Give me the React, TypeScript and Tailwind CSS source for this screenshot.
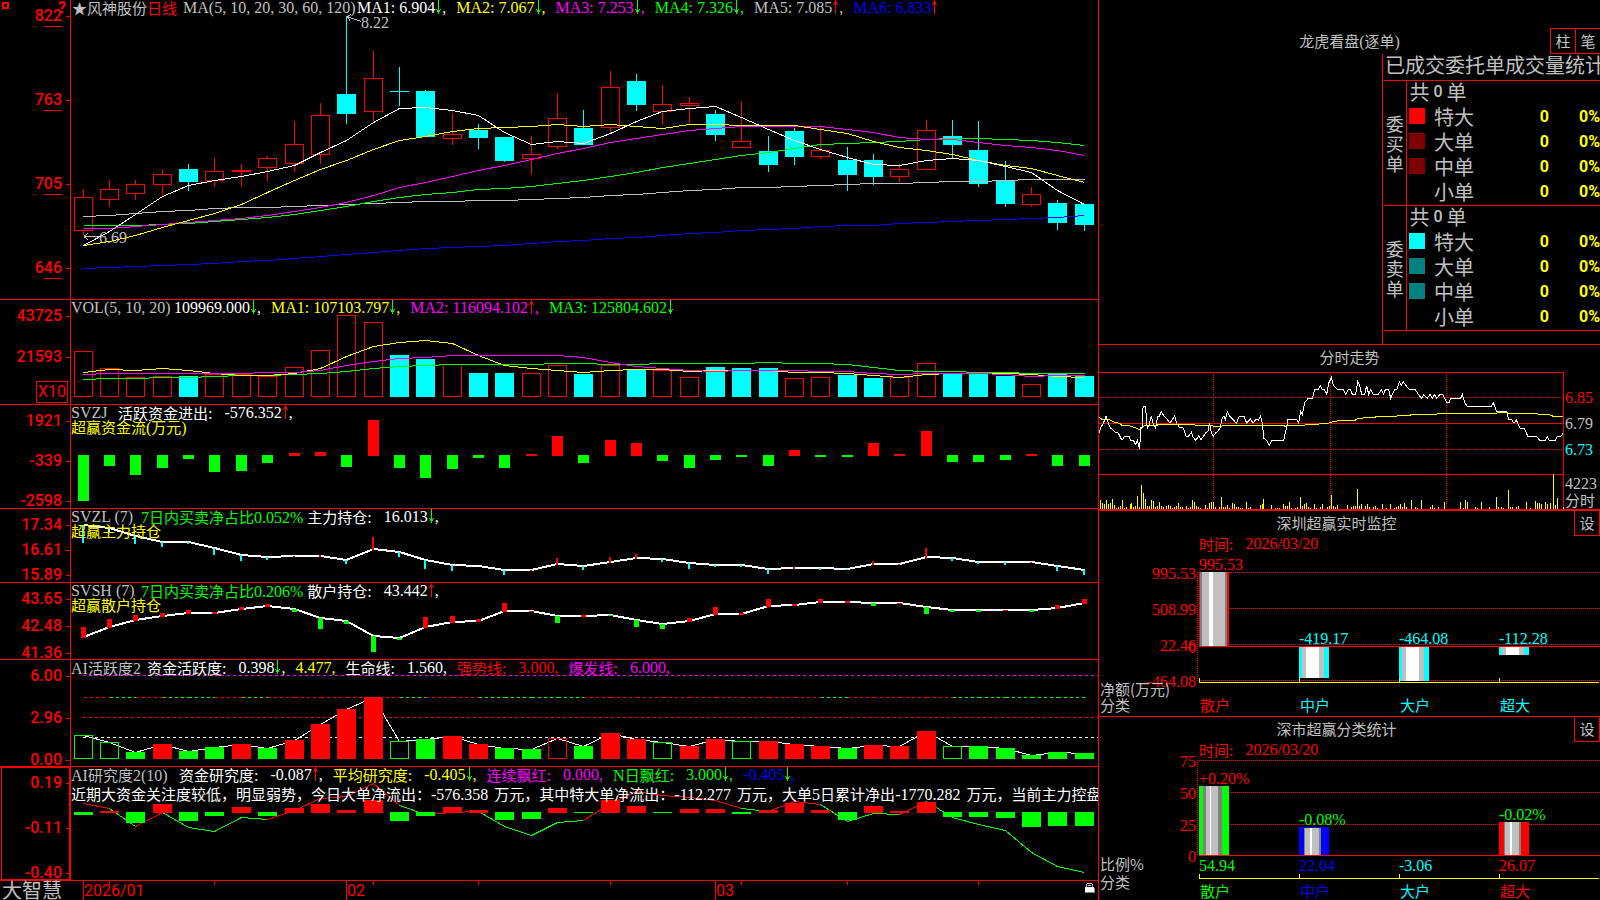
import type { ReactNode } from 'react'

const RED = '#ff0000'
const GREEN = '#00ff00'
const CYAN = '#00ffff'
const YELLOW = '#ffff00'
const MAGENTA = '#ff00ff'
const BLUE = '#0000ff'
const WHITE = '#ffffff'
const SILVER = '#c0c0c0'

// [high, body top, body bottom, low, rising]
const candles: [number, number, number, number, number][] = [
  [189, 197, 230, 235, 1], [180, 189, 199, 207, 1], [180, 184, 193, 200, 1], [169, 174, 184, 197, 1],
  [164, 169, 182, 191, 0], [158, 171, 180, 187, 1], [164, 170, 171, 187, 1], [156, 158, 167, 181, 1],
  [121, 144, 163, 172, 1], [103, 115, 154, 164, 1], [16, 94, 114, 124, 0], [51, 78, 111, 121, 1],
  [67, 91, 92, 106, 0], [90, 91, 137, 137, 0], [113, 134, 138, 145, 1], [124, 130, 138, 149, 0],
  [137, 137, 161, 162, 0], [136, 154, 158, 175, 1], [93, 118, 146, 149, 1], [110, 128, 145, 145, 0],
  [71, 87, 127, 133, 1], [74, 81, 105, 111, 0], [85, 104, 111, 125, 1], [97, 103, 105, 124, 1],
  [110, 114, 135, 141, 0], [101, 141, 147, 147, 1], [136, 151, 165, 172, 0], [128, 131, 157, 165, 0],
  [125, 150, 156, 159, 1], [147, 160, 175, 191, 0], [154, 160, 177, 185, 0], [164, 169, 176, 182, 1],
  [120, 130, 169, 169, 1], [120, 136, 145, 158, 0], [121, 150, 184, 187, 0], [161, 181, 204, 207, 0],
  [187, 194, 204, 207, 1], [200, 203, 223, 230, 0], [204, 204, 225, 231, 0],
]

const priceMa: [string, number[]][] = [
  [BLUE, [268, 267, 266, 265, 264, 263, 261, 260, 258, 256, 254, 252, 250, 248, 247, 246, 245, 243, 241, 240, 238, 237, 235, 233, 232, 230, 229, 228, 226, 225, 225, 223, 222, 221, 220, 219, 218, 217, 215]],
  [SILVER, [216, 215, 213, 211, 210, 208, 207, 207, 206, 205, 204, 203, 202, 201, 201, 200, 200, 199, 198, 197, 195, 194, 192, 190, 189, 187, 187, 186, 185, 184, 183, 183, 182, 181, 181, 180, 179, 179, 179]],
  [GREEN, [225, 225, 225, 224, 223, 221, 219, 217, 214, 210, 206, 201, 197, 194, 192, 189, 188, 186, 183, 180, 176, 172, 167, 163, 159, 155, 152, 148, 144, 143, 142, 141, 139, 138, 138, 139, 140, 142, 145]],
  [MAGENTA, [228, 228, 226, 224, 222, 220, 218, 215, 211, 207, 202, 195, 187, 182, 176, 170, 165, 159, 153, 148, 142, 138, 134, 130, 128, 126, 126, 126, 126, 129, 132, 137, 139, 139, 142, 145, 147, 150, 155]],
  [YELLOW, [245, 241, 235, 227, 220, 213, 204, 192, 180, 169, 160, 149, 140, 136, 131, 128, 127, 126, 124, 126, 124, 126, 128, 124, 124, 125, 125, 125, 129, 133, 141, 147, 150, 154, 160, 165, 168, 175, 182]],
  [WHITE, [245, 231, 214, 196, 185, 180, 176, 171, 165, 152, 140, 122, 108, 107, 110, 115, 132, 144, 141, 143, 133, 121, 111, 108, 106, 117, 129, 140, 149, 157, 164, 165, 160, 158, 160, 166, 172, 190, 204]],
]

const volumeTops = [51, 68, 77, 76, 76, 74, 74, 76, 67, 50, 15, 22, 55, 59, 64, 73, 73, 73, 65, 74, 65, 69, 70, 77, 67, 68, 68, 78, 77, 75, 78, 77, 63, 74, 74, 76, 84, 74, 76]
// r hollow, c filled
const volumeKind = 'rrrrcrrrrrrrccrccrrcrcrrcccrrccrrcccrcc'

const volumeMa: [string, number[]][] = [
  [GREEN, [79, 78, 78, 77, 77, 76, 75, 75, 74, 73, 71, 68, 66, 65, 64, 64, 64, 64, 63, 63, 64, 64, 63, 63, 63, 63, 62, 63, 63, 64, 67, 70, 71, 71, 72, 72, 73, 73, 73]],
  [YELLOW, [72, 69, 70, 68, 70, 73, 75, 75, 73, 68, 56, 46, 42, 40, 43, 55, 65, 68, 70, 72, 70, 69, 69, 71, 70, 70, 70, 72, 72, 73, 75, 77, 74, 73, 73, 73, 74, 76, 77]],
  [MAGENTA, [74, 73, 73, 73, 73, 73, 73, 72, 72, 70, 65, 61, 58, 57, 55, 55, 55, 55, 55, 57, 62, 66, 68, 70, 71, 70, 70, 70, 71, 71, 73, 74, 73, 73, 73, 74, 76, 75, 75]],
]

const flow = [-46, -11, -20, -13, -4, -17, -16, -8, 3, 4, -12, 36, -13, -23, -14, -3, -13, 2, 20, -8, 16, 13, -6, -13, -5, -2, -11, 6, -2, -2, 13, 2, 25, -7, -7, -5, 2, -11, -11]

const mainHold = [16, 19, 27, 33, 33, 39, 46, 48, 47, 47, 51, 40, 43, 51, 56, 57, 61, 61, 55, 57, 53, 49, 50, 54, 56, 56, 60, 59, 59, 60, 55, 55, 48, 49, 53, 53, 53, 57, 61]
const mainDelta = [-18, -5, -8, -5, -2, -7, -6, -3, 1, 2, -4, 13, -5, -9, -6, 0, -5, 1, 7, -4, 6, 5, -3, -6, -2, -2, -5, 2, -2, -1, 4, 1, 10, -3, -2, -3, 1, -5, -5]

const retailHold = [54, 44, 37, 33, 30, 30, 26, 23, 26, 35, 38, 53, 55, 44, 39, 38, 28, 28, 33, 33, 32, 37, 41, 38, 31, 31, 23, 22, 19, 19, 20, 20, 24, 27, 27, 27, 27, 25, 20]
const retailDelta = [11, 9, 6, 4, 4, 2, 3, 3, -3, -11, -3, -16, -2, 11, 7, 3, 9, 1, -7, 2, -1, -7, -5, 4, 8, 2, 8, 2, 4, 2, -3, 1, -7, -2, -2, 1, -2, 4, 5]

// g/r filled, G/R hollow
const activityKind = 'GGgrggrgrrrrGgrrggRgrrGrrGrrrgrrrGggggg'
const activityTops = [75, 82, 92, 84, 91, 87, 84, 88, 80, 64, 49, 37, 81, 79, 76, 84, 88, 89, 78, 86, 73, 79, 82, 86, 79, 81, 81, 84, 86, 88, 85, 86, 71, 86, 86, 88, 95, 92, 93]
const activitySegments = 'rgrggrgrrrrrgrrggggrrrrrrrrrgrrrrggggg'

const research = [-3, 2, -11, 9, -9, -4, 6, -4, 5, 9, 3, 13, -9, -4, 6, 3, -8, -7, 5, -1, 13, 7, -1, 4, 4, -2, 3, 10, 3, -8, 7, 2, 11, -5, -5, -6, -15, -14, -14]
const researchLine = [36, 41, 59, 45, 60, 64, 50, 52, 43, 31, 29, 16, 38, 47, 45, 44, 59, 68, 55, 53, 36, 24, 28, 30, 33, 41, 44, 34, 37, 54, 46, 47, 34, 50, 57, 63, 85, 99, 105]
const researchSegments = 'rgrggggrrrrrgrrggggrrrrrrgrrgggrgggggg'

const minutePrice =
  '27,280 33,262 40,250 48,228 55,250 62,264 70,270 76,277 84,278 96,301 103,290 118,290 121,301 130,301 137,314 142,302 149,328 152,262 156,262 156,213 161,199 166,199 168,220 172,265 178,252 184,228 190,252 197,265 203,228 208,228 214,215 222,228 230,236 240,250 246,240 254,228 260,250 268,262 280,264 289,290 296,288 304,277 309,290 317,301 326,288 333,299 341,288 348,277 354,274 358,250 364,277 370,289 378,277 384,274 391,262 396,236 402,228 406,238 412,215 418,228 427,236 439,250 448,228 462,228 470,250 481,236 489,250 498,238 505,240 512,228 517,252 522,295 530,301 538,315 545,301 581,301 589,265 594,238 620,238 626,250 632,215 637,225 644,187 655,175 667,175 674,149 684,149 691,137 697,148 704,150 710,163 716,130 724,113 730,135 742,149 760,149 767,163 774,149 782,149 787,163 797,163 803,125 809,137 815,163 824,163 830,137 836,163 842,149 849,163 865,163 874,149 881,163 886,149 896,149 902,175 908,160 914,149 920,149 928,125 934,135 940,125 948,137 958,149 976,149 985,163 995,175 1001,163 1012,175 1020,163 1027,175 1033,163 1040,175 1050,163 1058,163 1070,188 1078,187 1082,175 1112,175 1117,163 1124,188 1132,199 1204,199 1210,188 1220,215 1250,215 1256,238 1264,238 1272,250 1279,240 1290,265 1303,265 1314,290 1341,290 1349,301 1366,301 1372,290 1378,301 1396,301 1402,290 1412,290 1419,280'
const minuteAverage =
  '27,232 36,238 56,238 75,247 90,250 96,256 120,258 137,264 148,269 165,256 200,256 207,253 310,253 318,256 365,256 372,259 396,259 398,256 580,256 585,259 600,256 644,256 650,253 684,253 690,250 715,250 730,244 760,241 795,241 803,235 855,232 860,229 920,229 925,226 960,226 965,223 1040,223 1045,220 1220,220 1222,217 1250,217 1256,220 1340,220 1345,223 1375,223 1390,229 1419,229'
const minuteVolume =
  '31:480 37:489 43:492 49:480 55:492 60:490 67:477 73:495 79:504 85:501 91:498 97:480 103:504 109:501 121:492 124:489 130:501 136:498 142:468 148:501 154:435 160:459 166:477 172:498 178:498 184:480 190:483 196:500 202:499 208:486 214:498 220:501 229:498 235:495 241:498 247:504 253:500 259:497 265:489 271:501 277:500 289:498 295:504 301:501 307:480 313:486 319:498 325:501 331:504 346:495 352:504 358:489 364:486 370:486 376:501 388:501 394:471 400:501 406:501 412:495 418:504 427:489 433:492 439:500 445:501 451:504 457:504 469:486 475:504 481:501 511:495 517:492 520:477 545:495 556:504 562:504 568:504 580:492 586:498 592:499 598:486 604:504 616:504 622:501 631:471 637:498 643:492 649:489 655:501 661:504 673:492 679:504 691:501 697:492 712:501 718:498 724:465 730:498 736:502 742:495 772:495 784:500 790:498 796:498 802:447 808:498 814:492 826:498 832:492 838:500 850:501 856:498 862:504 877:492 889:504 901:492 913:504 919:501 925:498 931:492 937:500 943:490 949:501 964:480 976:501 982:504 994:480 1021:501 1027:495 1033:504 1045:501 1063:486 1111:486 1120:504 1126:480 1132:486 1156:500 1162:504 1174:486 1198:501 1219:471 1225:500 1234:501 1240:504 1255:450 1261:501 1267:502 1279:500 1285:498 1309:486 1321:504 1336:483 1342:489 1348:489 1354:492 1366:486 1372:492 1380:489 1390:402 1396:495 1402:474 1419:501'
    .split(' ')
    .map((p) => p.split(':').map(Number))

const cx = (i: number) => Math.floor(83.27 + i * 26.342)
const line = (ys: number[], dy = 0.5) => ys.map((y, i) => `${cx(i) + 0.5},${y + dy}`).join(' ')
const tone = (c: string) => (c.toLowerCase() === 'g' ? GREEN : RED)

// Chinese runs are set a little smaller than the Latin ones
function Mix({ text }: { text: string }) {
  return (
    <>
      {text.split(/([\u2600-\u26ff\u2e80-\u9fff\uff00-\uffef]+)/).map((run, i) =>
        i % 2 ? (
          <span key={i} className="text-[15px] [font-family:'Noto_Sans_CJK_SC',sans-serif]">{run}</span>
        ) : (
          run
        ),
      )}
    </>
  )
}

function Arrow({ dir }: { dir: 'up' | 'down' }) {
  return (
    <svg width="7" height="14" viewBox="0 0 7 14" shapeRendering="crispEdges" className="shrink-0">
      {dir === 'up' ? (
        <path d="M3 0h1v14h-1zM2 2h3v2h-3zM1 4h1v1h-1zM5 4h1v1h-1z" fill={RED} />
      ) : (
        <path d="M3 0h1v14h-1zM2 10h3v2h-3zM1 9h1v1h-1zM5 9h1v1h-1z" fill={GREEN} />
      )}
    </svg>
  )
}

type FieldProps = { label?: string; value: string; dir?: 'up' | 'down'; color: string; wide?: boolean; last?: boolean }

function Field({ label, value, dir, color, wide, last }: FieldProps) {
  return (
    <span className={`flex mr-2.5 ${color}`}>
      {label && <span className={wide ? 'mr-3' : 'mr-1'}><Mix text={label} /></span>}
      {value}
      {dir && <Arrow dir={dir} />}
      {!last && ','}
    </span>
  )
}

type PanelProps = {
  height: string
  viewHeight: number
  ticks: ReactNode[]
  gap: string
  axisExtra?: ReactNode
  header: ReactNode
  children: ReactNode
}

function Panel({ height, viewHeight, ticks, gap, axisExtra, header, children }: PanelProps) {
  return (
    <section className={`flex border-b border-[#ff0000] ${height}`}>
      <div className={`relative w-[71px] shrink-0 border-r border-[#ff0000] pt-1.5 flex flex-col ${gap}`}>
        {ticks.map((t, i) => (
          <div key={i} className="flex h-5 items-center justify-end text-base leading-5 font-medium text-[#ff0000] [font-family:Roboto,sans-serif]">
            {t}
            <i className="w-1 h-px bg-[#ff0000] ml-1" />
          </div>
        ))}
        {axisExtra}
      </div>
      <div className="relative flex-1 min-w-0 overflow-hidden">
        <svg
          className="absolute inset-0 w-full h-full"
          viewBox={`71 0 1027 ${viewHeight}`}
          preserveAspectRatio="none"
          shapeRendering="crispEdges"
          fill="none"
        >
          {children}
        </svg>
        <div className="relative">{header}</div>
      </div>
    </section>
  )
}

function Underlined({ value }: { value: string }) {
  return (
    <span className="flex">
      {value[0]}
      <span className="border-b border-[#ff0000]">{value.slice(1)}</span>
    </span>
  )
}

function Row({ children }: { children: ReactNode }) {
  return <div className="flex h-[15px] leading-4 whitespace-nowrap">{children}</div>
}

function Subtitle({ text }: { text: string }) {
  return <div className="leading-[14px] text-[#ffff00]"><Mix text={text} /></div>
}

function SignedBars({ data, base, width }: { data: number[]; base: number; width: number }) {
  return (
    <>
      {data.map((v, i) => (
        <rect
          key={i}
          x={cx(i) - (width - 1) / 2}
          y={v > 0 ? base + 1 - v : base}
          width={width}
          height={Math.abs(v)}
          fill={v > 0 ? RED : GREEN}
        />
      ))}
    </>
  )
}

function Segments({ ys, kinds, dash }: { ys: number[]; kinds: string; dash?: string }) {
  return (
    <>
      {kinds.split('').map((k, i) => (
        <line key={i} x1={cx(i) + 0.5} y1={ys[i] + 0.5} x2={cx(i + 1) + 0.5} y2={ys[i + 1] + 0.5} stroke={tone(k)} strokeDasharray={dash} />
      ))}
    </>
  )
}

function Charts() {
  return (
    <main className="flex-1 min-w-0">
      <Panel
        height="h-[300px]"
        viewHeight={299}
        gap="gap-16"
        ticks={['822', '763', '705', '646'].map((v) => <Underlined key={v} value={v} />)}
        axisExtra={
          <>
            <svg className="absolute left-0.5 top-0.5" width="8" height="8" viewBox="0 0 8 8" shapeRendering="crispEdges">
              <path d="M0 0h7v7h-7zM2 2v3h3v-3zM6 6h2v1h-2zM0 7h1v1h-1z" fill={RED} fillRule="evenodd" />
            </svg>
            <span className="absolute right-1 top-0 text-base leading-4 font-bold text-[#ff0000] [font-family:Roboto,sans-serif]">?</span>
          </>
        }
        header={
          <div className="pl-px">
            <Row>
              <span><Mix text="★风神股份" /></span>
              <span className="text-[#ff0000] mr-1.5"><Mix text="日线" /></span>
              <span className="w-[174px]">MA(5, 10, 20, 30, 60, 120)</span>
              <Field label="MA1:" value="6.904" dir="down" color="text-white" />
              <Field label="MA2:" value="7.067" dir="down" color="text-[#ffff00]" />
              <Field label="MA3:" value="7.253" dir="down" color="text-[#ff00ff]" />
              <Field label="MA4:" value="7.326" dir="down" color="text-[#00ff00]" />
              <Field label="MA5:" value="7.085" dir="up" color="text-[#c0c0c0]" />
              <Field label="MA6:" value="6.833" dir="up" color="text-[#0000ff]" last />
            </Row>
          </div>
        }
      >
        <text x="361" y="22" fill={SILVER} dominantBaseline="central">8.22</text>
        <text x="99" y="237" fill={SILVER} dominantBaseline="central">6.69</text>
        <path d="M347 16.5l14 5M347 16.5l4 -2M347 16.5l3 4M84 236.5h15M84 236.5l4 -3M84 236.5l4 3" stroke={SILVER} />
        {candles.map(([high, top, bottom, low, up], i) => {
          const x = cx(i)
          return up ? (
            <g key={i} stroke={RED}>
              <path d={`M${x + 0.5} ${high}V${top}M${x + 0.5} ${bottom}V${low}`} />
              <rect x={x - 8.5} y={top + 0.5} width="18" height={bottom - top} />
            </g>
          ) : (
            <g key={i} fill={CYAN}>
              <rect x={x} y={high} width="1" height={low - high} />
              <rect x={x - 9} y={top} width="19" height={bottom - top} />
            </g>
          )
        })}
        {priceMa.map(([color, ys]) => <polyline key={color} points={line(ys)} stroke={color} />)}
      </Panel>

      <Panel
        height="h-[105px]"
        viewHeight={104}
        gap="gap-[21px]"
        ticks={['43725', '21593']}
        axisExtra={
          <span className="absolute right-0.5 bottom-px w-8 h-[22px] border border-[#ff0000] text-base leading-5 text-center text-[#ff0000] [font-family:Roboto,sans-serif]">X10</span>
        }
        header={
          <Row>
            <span className="w-[103px]">VOL(5, 10, 20)</span>
            <Field value="109969.000" dir="down" color="text-white" />
            <Field label="MA1:" value="107103.797" dir="down" color="text-[#ffff00]" />
            <Field label="MA2:" value="116094.102" dir="up" color="text-[#ff00ff]" />
            <Field label="MA3:" value="125804.602" dir="down" color="text-[#00ff00]" last />
          </Row>
        }
      >
        {volumeTops.map((top, i) =>
          volumeKind[i] === 'r' ? (
            <rect key={i} x={cx(i) - 8.5} y={top + 0.5} width="18" height={96 - top} stroke={RED} />
          ) : (
            <rect key={i} x={cx(i) - 9} y={top} width="19" height={97 - top} fill={CYAN} />
          ),
        )}
        {volumeMa.map(([color, ys]) => <polyline key={color} points={line(ys)} stroke={color} />)}
      </Panel>

      <Panel
        height="h-[104px]"
        viewHeight={103}
        gap="gap-5"
        ticks={['1921', '-339', '-2598']}
        header={
          <>
            <Row>
              <span className="w-[47px]">SVZJ</span>
              <Field wide label="活跃资金进出:" value="-576.352" dir="up" color="text-white" />
            </Row>
            <Subtitle text="超赢资金流(万元)" />
          </>
        }
      >
        <SignedBars data={flow} base={50} width={11} />
      </Panel>

      <Panel
        height="h-[74px]"
        viewHeight={73}
        gap="gap-[5px]"
        ticks={['17.34', '16.61', '15.89']}
        header={
          <>
            <Row>
              <span className="w-[70px]">SVZL (7)</span>
              <span className="text-[#00ff00] mr-1"><Mix text="7日内买卖净占比0.052%" /></span>
              <Field wide label="主力持仓:" value="16.013" dir="down" color="text-white" />
            </Row>
            <Subtitle text="超赢主力持仓" />
          </>
        }
      >
        <polyline points={line(mainHold, 0)} stroke={WHITE} strokeWidth="2" />
        {mainDelta.map((v, i) => (
          <rect key={i} x={cx(i) - 1} y={v > 0 ? mainHold[i] + 1 - v : mainHold[i]} width="2" height={Math.abs(v)} fill={v > 0 ? RED : CYAN} />
        ))}
      </Panel>

      <Panel
        height="h-[77px]"
        viewHeight={76}
        gap="gap-[7px]"
        ticks={['43.65', '42.48', '41.36']}
        header={
          <>
            <Row>
              <span className="w-[70px]">SVSH (7)</span>
              <span className="text-[#00ff00] mr-1"><Mix text="7日内买卖净占比0.206%" /></span>
              <Field wide label="散户持仓:" value="43.442" dir="up" color="text-white" />
            </Row>
            <Subtitle text="超赢散户持仓" />
          </>
        }
      >
        <polyline points={line(retailHold, 0)} stroke={WHITE} strokeWidth="2" />
        {retailDelta.map((v, i) => (
          <rect key={i} x={cx(i) - 2} y={v > 0 ? retailHold[i] + 1 - v : retailHold[i]} width="5" height={Math.abs(v)} fill={v > 0 ? RED : GREEN} />
        ))}
      </Panel>

      <Panel
        height="h-[107px]"
        viewHeight={106}
        gap="gap-[22px]"
        ticks={['6.00', '2.96', '0.00']}
        header={
          <Row>
            <span className="w-[76px]"><Mix text="AI活跃度2" /></span>
            <Field wide label="资金活跃度:" value="0.398" dir="down" color="text-white" />
            <Field value="4.477" color="text-[#ffff00]" />
            <Field wide label="生命线:" value="1.560" color="text-white" />
            <Field wide label="强势线:" value="3.000" color="text-[#ff0000]" />
            <Field wide label="爆发线:" value="6.000" color="text-[#ff00ff]" />
          </Row>
        }
      >
        <path d="M83 15.5H1098" stroke={MAGENTA} strokeDasharray="3 3" />
        <path d="M83 57.5H1098" stroke={RED} strokeDasharray="3 3" />
        <path d="M83 77.5H1098" stroke={WHITE} strokeDasharray="3 3" />
        <Segments ys={activityTops.map(() => 37)} kinds={activitySegments} dash="3 3" />
        <polyline points={line(activityTops)} stroke={WHITE} />
        {activityTops.map((top, i) => {
          const k = activityKind[i]
          return k === k.toUpperCase() ? (
            <rect key={i} x={cx(i) - 8.5} y={top + 0.5} width="18" height={98 - top} stroke={tone(k)} />
          ) : (
            <rect key={i} x={cx(i) - 9} y={top} width="19" height={99 - top} fill={tone(k)} />
          )
        })}
      </Panel>

      <Panel
        height="h-[114px]"
        viewHeight={113}
        gap="gap-[25px]"
        ticks={['0.19', '-0.11', '-0.40']}
        axisExtra={<i className="absolute inset-y-0 left-px right-0 border border-[#ff0000]" />}
        header={
          <>
            <Row>
              <span className="w-[108px]"><Mix text="AI研究度2(10)" /></span>
              <Field wide label="资金研究度:" value="-0.087" dir="up" color="text-white" />
              <Field wide label="平均研究度:" value="-0.405" dir="down" color="text-[#ffff00]" />
              <Field wide label="连续飘红:" value="0.000" color="text-[#ff00ff]" />
              <Field wide label="N日飘红:" value="3.000" dir="down" color="text-[#00ff00]" />
              <Field value="-0.405" dir="down" color="text-[#0000ff]" />
            </Row>
            <p className="pt-1 leading-4 text-white whitespace-nowrap">
              <Mix text="近期大资金关注度较低，明显弱势，今日大单净流出：" />
              <span className="pr-1.5">-576.358</span>
              <Mix text="万元，其中特大单净流出：" />
              <span className="pr-1.5">-112.277</span>
              <Mix text="万元，大单5日累计净出" />
              <span className="pr-1.5">-1770.282</span>
              <Mix text="万元，当前主力控盘" />
            </p>
          </>
        }
      >
        <Segments ys={researchLine} kinds={researchSegments} />
        <SignedBars data={research} base={45} width={19} />
      </Panel>

      <footer className="flex h-[19px]">
        <div className="w-[71px] shrink-0 pl-0.5 text-xl leading-[17px] [font-family:'Noto_Sans_CJK_SC',sans-serif]">大智慧</div>
        <div className="relative flex-1 min-w-0 grid grid-cols-[12fr_263fr_369fr_383fr] text-base leading-[19px] text-[#ff0000] [font-family:Roboto,sans-serif]">
          <svg className="absolute inset-0 w-full h-1" viewBox="71 0 1027 4" preserveAspectRatio="none" shapeRendering="crispEdges">
            {[1, 5, 11, 15, 20, 25, 29, 34].map((i) => <rect key={i} x={cx(i)} y="0" width="1" height="4" fill={RED} />)}
          </svg>
          <span />
          <span className="border-l border-[#ff0000]">2026/01</span>
          <span className="border-l border-[#ff0000]">02</span>
          <span className="border-l border-[#ff0000] flex justify-between">
            03
            <svg className="mt-0.5 mr-0.5" width="11" height="11" viewBox="0 0 11 11" shapeRendering="crispEdges">
              <path d="M2 0h5v1h-5zM1 1h1v3h-1zM7 1h1v3h-1zM3 2h3v1h-3z" fill={SILVER} />
              <path d="M0 4h9v5h-9z" fill={WHITE} />
              <path d="M9 5h1v5h-10v-1h9z" fill="#808080" />
            </svg>
          </span>
        </div>
      </footer>
    </main>
  )
}

const orderGroups = [
  { side: '委买单', swatches: ['bg-[#ff0000]', 'bg-[#800000]', 'bg-[#800000]', ''] },
  { side: '委卖单', swatches: ['bg-[#00ffff]', 'bg-[#008080]', 'bg-[#008080]', ''] },
]
const orderNames = ['特大', '大单', '中单', '小单']

function Orders() {
  return (
    <section className="h-[345px] border-b border-[#ff0000] flex flex-col">
      <header className="relative h-[54px] shrink-0 pt-[33px]">
        <h2 className="text-center leading-4"><Mix text="龙虎看盘(逐单)" /></h2>
        <div className="absolute right-0 bottom-0 flex text-[15px] [font-family:'Noto_Sans_CJK_SC',sans-serif]">
          <button className="w-[25px] h-[26px] leading-[22px] border-l border-y border-[#ff0000]">柱</button>
          <button className="w-[25px] h-[26px] leading-[22px] border-l border-y border-[#ff0000]">笔</button>
        </div>
      </header>
      <div className="flex-1 w-[218px] ml-auto pl-px border-l border-[#ff0000] overflow-hidden [font-family:'Noto_Sans_CJK_SC',sans-serif]">
        <h3 className="h-[26px] leading-[22px] pl-px text-xl whitespace-nowrap overflow-hidden">已成交委托单成交量统计</h3>
        <table className="w-full border-collapse text-xl leading-[22px]">
          {orderGroups.map((g) => (
            <tbody key={g.side} className="border-y border-[#ff0000] align-top">
              <tr className="h-[25px]">
                <th rowSpan={5} className="w-[22px] p-0 border-r border-[#ff0000] align-middle text-lg leading-5 font-normal">
                  {g.side.split('').map((c) => <div key={c}>{c}</div>)}
                </th>
                <td colSpan={4} className="p-0 pl-[3px]">
                  <div className="flex h-[22px]">
                    共<span className="px-1 text-base leading-[22px] font-medium [font-family:Roboto,sans-serif]">0</span>单
                  </div>
                </td>
              </tr>
              {orderNames.map((name, i) => (
                <tr key={name} className="h-[25px]">
                  <td className="w-7 p-0 pt-0.5 pl-0.5"><i className={`block size-4 ${g.swatches[i]}`} /></td>
                  <td className="p-0">{name}</td>
                  <td className="p-0 text-right text-base leading-[22px] font-bold text-[#ffff00] [font-family:Roboto,sans-serif]">0</td>
                  <td className="w-[51px] p-0 text-right text-base leading-[22px] font-bold text-[#ffff00] [font-family:Roboto,sans-serif]">0%</td>
                </tr>
              ))}
            </tbody>
          ))}
        </table>
      </div>
    </section>
  )
}

function Intraday() {
  return (
    <section className="border-b-2 border-[#ff0000]">
      <h2 className="h-[27px] leading-6 text-center"><Mix text="分时走势" /></h2>
      <div className="flex h-[137px]">
        <svg className="flex-1 min-w-0 h-full" viewBox="27 96 1395 411" preserveAspectRatio="none" shapeRendering="crispEdges" fill="none">
          <g stroke={RED} strokeWidth="3">
            <path d="M27 97.5H1422M27 250.5H1422M27 403.5H1422M1420.5 97V510" />
            <path d="M27 172.5H1422M27 328.5H1422M370.5 100V510M721.5 100V510M1069.5 100V510" strokeDasharray="3 3" />
          </g>
          {minuteVolume.map(([x, top]) => <rect key={x} x={x - 1} y={top} width="3" height={507 - top} fill={YELLOW} />)}
          <polyline points={minuteAverage} stroke={YELLOW} strokeWidth="3" />
          <polyline points={minutePrice} stroke={WHITE} strokeWidth="3" />
        </svg>
        <div className="w-9 pl-px pt-[18px] leading-4 flex flex-col gap-2.5">
          <span className="text-[#ff0000]">6.85</span>
          <span>6.79</span>
          <span className="text-[#00ffff]">6.73</span>
          <span className="pt-2">4223<br /><Mix text="分时" /></span>
        </div>
      </div>
    </section>
  )
}

type LabelProps = { x: number; y: number; fill: string; end?: boolean; cjk?: boolean; children: string }

function Label({ x, y, fill, end, cjk, children }: LabelProps) {
  return (
    <text
      x={x}
      y={cjk ? y - 1 : y}
      fill={fill}
      textAnchor={end ? 'end' : 'start'}
      dominantBaseline="central"
      className={cjk ? "text-[15px] [font-family:'Noto_Sans_CJK_SC',sans-serif]" : ''}
    >
      {children}
    </text>
  )
}

// nested rects give the bars their cylinder sheen: [x, width, colour]
function Cylinder({ top, bottom, bands }: { top: number; bottom: number; bands: [number, number, string][] }) {
  return (
    <>
      {bands.map(([x, w, c], i) => <rect key={i} x={x} y={top} width={w} height={bottom - top} fill={c} />)}
    </>
  )
}

function StatHeader({ title }: { title: string }) {
  return (
    <>
      <header className="flex h-[25px]">
        <h2 className="flex-1 text-center leading-6"><Mix text={title} /></h2>
        <button className="w-[26px] border-x border-b border-[#ff0000] text-[15px] leading-[22px] [font-family:'Noto_Sans_CJK_SC',sans-serif]">设</button>
      </header>
      <div className="h-[17px] leading-4 pl-[100px] text-[#ff0000] flex gap-3">
        <span><Mix text="时间:" /></span>
        <span>2026/03/20</span>
      </div>
    </>
  )
}

function AxisTicks({ y }: { y: number }) {
  return <path d={`M100.5 ${y - 4}V${y + 0.5}H500M200.5 ${y - 4}V${y}M300.5 ${y - 4}V${y}M400.5 ${y - 4}V${y}`} stroke={YELLOW} />
}

const GRAY = '#808080'

function NetAmount() {
  return (
    <section className="border-b border-[#ff0000]">
      <StatHeader title="深圳超赢实时监控" />
      <svg className="block w-full h-[163px] overflow-visible" viewBox="0 0 501 163" preserveAspectRatio="none" shapeRendering="crispEdges" fill="none">
        <path d="M98 19.5H501M98 55.5H501M98 91.5H501M98 127.5H501M98.5 19V128" stroke={RED} strokeDasharray="1 1" />
        <path d="M100 93.5H501" stroke={RED} />
        <Label x={97} y={20} fill={RED} end>995.53</Label>
        <Label x={97} y={56} fill={RED} end>508.99</Label>
        <Label x={97} y={92} fill={RED} end>22.46</Label>
        <Label x={97} y={94} fill={RED} end>0</Label>
        <Label x={97} y={128} fill={RED} end>-464.08</Label>
        <Label x={1} y={136} fill={SILVER} cjk>净额(万元)</Label>
        <Label x={1} y={152} fill={SILVER} cjk>分类</Label>
        <Cylinder top={19} bottom={93} bands={[[100, 30, RED], [101, 27, GRAY], [103, 23, SILVER], [110, 4, WHITE]]} />
        <Cylinder top={94} bottom={125} bands={[[200, 30, CYAN], [203, 22, SILVER], [207, 13, WHITE]]} />
        <Cylinder top={94} bottom={128} bands={[[300, 30, CYAN], [303, 22, SILVER], [307, 13, WHITE]]} />
        <Cylinder top={94} bottom={102} bands={[[400, 30, CYAN], [403, 22, SILVER], [407, 13, WHITE]]} />
        <Label x={100} y={11} fill={RED}>995.53</Label>
        <Label x={200} y={85} fill={CYAN}>-419.17</Label>
        <Label x={300} y={85} fill={CYAN}>-464.08</Label>
        <Label x={400} y={85} fill={CYAN}>-112.28</Label>
        <AxisTicks y={129} />
        <Label x={101} y={152} fill={RED} cjk>散户</Label>
        <Label x={201} y={152} fill={CYAN} cjk>中户</Label>
        <Label x={301} y={152} fill={CYAN} cjk>大户</Label>
        <Label x={401} y={152} fill={CYAN} cjk>超大</Label>
      </svg>
    </section>
  )
}

function Share() {
  return (
    <section>
      <StatHeader title="深市超赢分类统计" />
      <svg className="block w-full h-[141px] overflow-visible" viewBox="0 0 501 141" preserveAspectRatio="none" shapeRendering="crispEdges" fill="none">
        <path d="M98 1.5H501M98 33.5H501M98 65.5H501M98.5 1V97" stroke={RED} strokeDasharray="1 1" />
        <path d="M100 96.5H501" stroke={RED} />
        <Label x={97} y={2} fill={RED} end>75</Label>
        <Label x={97} y={34} fill={RED} end>50</Label>
        <Label x={97} y={66} fill={RED} end>25</Label>
        <Label x={97} y={97} fill={RED} end>0</Label>
        <Label x={1} y={105} fill={SILVER} cjk>比例%</Label>
        <Label x={1} y={123} fill={SILVER} cjk>分类</Label>
        <Cylinder top={27} bottom={96} bands={[[100, 30, GREEN], [104, 19, GRAY], [107, 12, SILVER], [111, 1, WHITE]]} />
        <Cylinder top={68} bottom={69} bands={[[200, 30, BLUE]]} />
        <Cylinder top={69} bottom={96} bands={[[200, 30, BLUE], [205, 17, GRAY], [206, 14, SILVER], [211, 2, WHITE]]} />
        <Cylinder top={63} bottom={96} bands={[[400, 30, RED], [405, 17, GRAY], [406, 14, SILVER], [411, 2, WHITE]]} />
        <Label x={100} y={19} fill={RED}>+0.20%</Label>
        <Label x={200} y={60} fill={GREEN}>-0.08%</Label>
        <Label x={400} y={55} fill={GREEN}>-0.02%</Label>
        <Label x={100} y={106} fill={GREEN}>54.94</Label>
        <Label x={200} y={106} fill={BLUE}>22.04</Label>
        <Label x={300} y={106} fill={CYAN}>-3.06</Label>
        <Label x={400} y={106} fill={RED}>26.07</Label>
        <AxisTicks y={119} />
        <Label x={101} y={132} fill={GREEN} cjk>散户</Label>
        <Label x={201} y={132} fill={BLUE} cjk>中户</Label>
        <Label x={301} y={132} fill={CYAN} cjk>大户</Label>
        <Label x={401} y={132} fill={RED} cjk>超大</Label>
      </svg>
    </section>
  )
}

export default function App() {
  return (
    <div className="flex min-h-screen overflow-hidden bg-black text-base text-[#c0c0c0] [font-family:'Liberation_Serif','Noto_Sans_CJK_SC',serif]">
      <Charts />
      <aside className="w-[502px] shrink-0 border-l border-[#ff0000]">
        <Orders />
        <Intraday />
        <NetAmount />
        <Share />
      </aside>
    </div>
  )
}
